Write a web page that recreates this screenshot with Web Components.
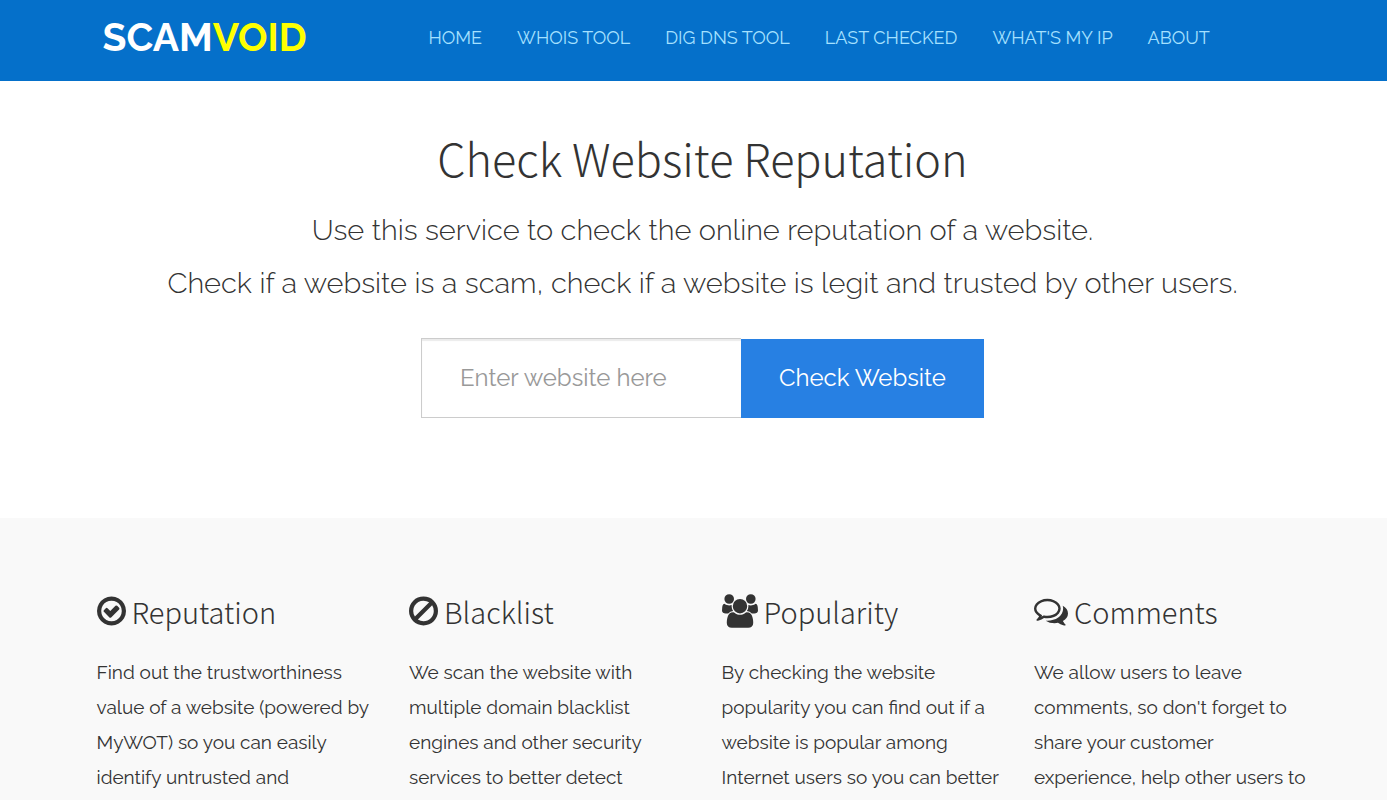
<!DOCTYPE html>
<html lang="en">
<head>
<meta charset="utf-8">
<meta name="viewport" content="width=device-width, initial-scale=1">
<title>Check Website Reputation</title>
<style>
  body {
    margin: 0;
    background: #fff;
    color: #333;
    font-family: Raleway, Lato, sans-serif;
    --heading-font: "Noto Sans CJK SC", "Open Sans", sans-serif;
    --shell: 1250px;
    --shift: 18px;
  }
</style>
</head>
<body>
<site-header>
  <nav-link href="#home">HOME</nav-link>
  <nav-link href="#whois">WHOIS TOOL</nav-link>
  <nav-link href="#dig">DIG DNS TOOL</nav-link>
  <nav-link href="#last">LAST CHECKED</nav-link>
  <nav-link href="#ip">WHAT'S MY IP</nav-link>
  <nav-link href="#about">ABOUT</nav-link>
</site-header>

<main>
  <site-hero>
    <span slot="title">Check Website Reputation</span>
    <p>Use this service to check the online reputation of a website.</p>
    <p>Check if a website is a scam, check if a website is legit and trusted by other users.</p>
    <check-form slot="form"></check-form>
  </site-hero>

  <feature-grid>
    <feature-card icon="check" heading="Reputation">Find out the trustworthiness value of a website (powered by MyWOT) so you can easily identify untrusted and</feature-card>
    <feature-card icon="ban" heading="Blacklist">We scan the website with multiple domain blacklist engines and other security services to better detect</feature-card>
    <feature-card icon="users" heading="Popularity">By checking the website popularity you can find out if a website is popular among Internet users so you can better</feature-card>
    <feature-card icon="comments" heading="Comments">We allow users to leave comments, so don't forget to share your customer experience, help other users to</feature-card>
  </feature-grid>
</main>

<script>
const ICONS = {
  check: { box: "128 0 1536 1792", width: 29, path: "M1299 813l-422 422q-19 19-45 19t-45-19l-294-294q-19-19-19-45t19-45l102-102q19-19 45-19t45 19l147 147 275-275q19-19 45-19t45 19l102 102q19 19 19 45t-19 45zm141 83q0-148-73-273t-198-198-273-73-273 73-198 198-73 273 73 273 198 198 273 73 273-73 198-198 73-273zm224 0q0 209-103 385.5t-279.5 279.5-385.5 103-385.5-103-279.5-279.5-103-385.5 103-385.5 279.5-279.5 385.5-103 385.5 103 279.5 279.5 103 385.5z" },
  ban: { box: "128 0 1536 1792", width: 29, path: "M1440 893q0-161-87-295l-754 753q137 89 297 89 111 0 211.5-43.5t173.5-116.5 116-174.5 43-212.5zm-999 299l755-754q-135-91-300-91-148 0-273 73t-198 199-73 274q0 162 89 299zm1223-299q0 157-61 300t-163.5 246-245 164-298.5 61-298.5-61-245-164-163.5-246-61-300 61-299.5 163.5-245.5 245-164 298.5-61 298.5 61 245 164 163.5 245.5 61 299.5z" },
  users: { box: "0 0 1920 1792", width: 36, path: "M593 896q-162 5-265 128h-134q-82 0-138-40.5t-56-118.5q0-353 124-353 6 0 43.5 21t97.5 42.5 119 21.5q67 0 133-23-5 37-5 66 0 139 81 256zm1071 637q0 120-73 189.5t-194 69.5h-874q-121 0-194-69.5t-73-189.5q0-53 3.5-103.5t14-109 26.5-108.5 43-97.5 62-81 85.5-53.5 111.5-20q10 0 43 21.5t73 48 107 48 135 21.5 135-21.5 107-48 73-48 43-21.5q61 0 111.5 20t85.5 53.5 62 81 43 97.5 26.5 108.5 14 109 3.5 103.5zm-1024-1277q0 106-75 181t-181 75-181-75-75-181 75-181 181-75 181 75 75 181zm704 384q0 159-112.5 271.5t-271.5 112.5-271.5-112.5-112.5-271.5 112.5-271.5 271.5-112.5 271.5 112.5 112.5 271.5zm576 225q0 78-56 118.5t-138 40.5h-134q-103-123-265-128 81-117 81-256 0-29-5-66 66 23 133 23 59 0 119-21.5t97.5-42.5 43.5-21q124 0 124 353zm-128-609q0 106-75 181t-181 75-181-75-75-181 75-181 181-75 181 75 75 181z" },
  comments: { box: "0 0 1792 1792", width: 34, path: "M704 384q-153 0-286 52t-211.5 141-78.5 191q0 82 53 158t149 132l97 56-35 84q34-20 62-39l44-31 53 10q78 14 153 14 153 0 286-52t211.5-141 78.5-191-78.5-191-211.5-141-286-52zm0-128q191 0 353.5 68.5t256.5 186.5 94 257-94 257-256.5 186.5-353.5 68.5q-86 0-176-16-124 88-278 128-36 9-86 16h-3q-11 0-20.5-8t-11.5-21q-1-3-1-6.5t.5-6.5 2-6l2.5-5 3.5-5.5 4-5 4.5-5 4-4.5q5-6 23-25t26-29.5 22.5-29 25-38.5 20.5-44q-124-72-195-177t-71-224q0-139 94-257t256.5-186.5 353.5-68.5zm822 1169q10 24 20.5 44t25 38.5 22.5 29 26 29.5 23 25q1 1 4 4.5t4.5 5 4 5 3.5 5.5l2.5 5 2 6 .5 6.5-1 6.5q-3 14-13 22t-22 7q-50-7-86-16-154-40-278-128-90 16-176 16-271 0-472-132 58 4 88 4 161 0 309-45t264-129q125-92 192-212t67-254q0-77-23-152 129 71 204 178t75 230q0 120-71 224.5t-195 176.5z" }
};

class SiteHeader extends HTMLElement {
  constructor() {
    super();
    this.attachShadow({ mode: "open" });
  }

  connectedCallback() {
    this.shadowRoot.innerHTML = `
      <style>
        :host { display: block; background: #0570ca; padding-left: var(--shift); }
        header {
          box-sizing: border-box; max-width: var(--shell); min-height: 81px; margin: 0 auto;
          padding: 0 15px 6px 19px; display: grid; grid-template-columns: 1fr 3fr; align-items: center;
        }
        .logo { padding: 0 0 2px 6px; color: #fff; font-size: 39px; line-height: 50px; font-weight: 700; text-decoration: none; }
        .logo span { color: #ff0; }
        nav { display: flex; flex-wrap: wrap; gap: 0 35px; padding-left: 28px; }
      </style>
      <header>
        <a class="logo" href="#home">SCAM<span>VOID</span></a>
        <nav aria-label="Main"><slot></slot></nav>
      </header>
    `;
  }
}

class NavLink extends HTMLElement {
  constructor() {
    super();
    this.attachShadow({ mode: "open" });
  }

  connectedCallback() {
    this.shadowRoot.innerHTML = `
      <style>
        :host { display: block; }
        a { color: #a5e1ff; font-size: 18px; line-height: 24px; text-decoration: none; white-space: nowrap; }
        a:hover { color: #fff; }
      </style>
      <a href="${this.getAttribute("href") || "#"}"><slot></slot></a>
    `;
  }
}

class SiteHero extends HTMLElement {
  constructor() {
    super();
    this.attachShadow({ mode: "open" });
  }

  connectedCallback() {
    this.shadowRoot.innerHTML = `
      <style>
        :host { display: block; padding: 45px 0 100px var(--shift); text-align: center; }
        h1 { margin: 0 0 14px; font-family: var(--heading-font); font-size: 45px; line-height: 64px; font-weight: 300; }
        ::slotted(p) { margin: 0; font-size: 29px; line-height: 53px; font-weight: 300; }
        .form { margin-top: 28px; }
      </style>
      <section>
        <h1><slot name="title"></slot></h1>
        <slot></slot>
        <div class="form"><slot name="form"></slot></div>
      </section>
    `;
  }
}

class CheckForm extends HTMLElement {
  constructor() {
    super();
    this.attachShadow({ mode: "open" });
  }

  connectedCallback() {
    this.shadowRoot.innerHTML = `
      <style>
        :host { display: block; }
        form { display: flex; justify-content: center; align-items: flex-end; }
        input, button { box-sizing: border-box; margin: 0; padding: 0 38px 2px; border-radius: 0; font: inherit; font-size: 24px; line-height: 32px; }
        input {
          width: 320px; height: 80px; border: 1px solid #ccc; border-right: 0;
          background: #fff; color: #333; box-shadow: inset 0 2px 1px rgba(0, 0, 0, 0.08);
        }
        input::placeholder { color: #999; opacity: 1; }
        button { height: 79px; border: 0; background: #2780e3; color: #fff; cursor: pointer; }
        button:hover { background: #1967be; }
      </style>
      <form onsubmit="return false">
        <input type="text" name="site" aria-label="Website" placeholder="Enter website here">
        <button type="submit">Check Website</button>
      </form>
    `;
  }
}

class FeatureGrid extends HTMLElement {
  constructor() {
    super();
    this.attachShadow({ mode: "open" });
  }

  connectedCallback() {
    this.shadowRoot.innerHTML = `
      <style>
        :host { display: block; background: #f9f9f9; padding: 69px 0 69px var(--shift); }
        section {
          box-sizing: border-box; max-width: var(--shell); margin: 0 auto; padding: 0 15px 0 19px;
          display: grid; grid-template-columns: repeat(4, 1fr); gap: 34px;
        }
      </style>
      <section><slot></slot></section>
    `;
  }
}

class FeatureCard extends HTMLElement {
  constructor() {
    super();
    this.attachShadow({ mode: "open" });
  }

  connectedCallback() {
    const icon = ICONS[this.getAttribute("icon")];
    this.shadowRoot.innerHTML = `
      <style>
        :host { display: block; }
        h3 {
          display: flex; align-items: center; gap: 6px; margin: 0 0 20px;
          font-family: var(--heading-font); font-size: 29px; line-height: 48px; font-weight: 300;
        }
        svg { flex: none; height: 34px; fill: currentColor; }
        p { margin: 0; font-size: 19px; line-height: 35px; }
      </style>
      <h3><svg viewBox="${icon.box}" width="${icon.width}" aria-hidden="true"><path d="${icon.path}"/></svg>${this.getAttribute("heading")}</h3>
      <p><slot></slot></p>
    `;
  }
}

customElements.define("site-header", SiteHeader);
customElements.define("nav-link", NavLink);
customElements.define("site-hero", SiteHero);
customElements.define("check-form", CheckForm);
customElements.define("feature-grid", FeatureGrid);
customElements.define("feature-card", FeatureCard);
</script>
</body>
</html>
